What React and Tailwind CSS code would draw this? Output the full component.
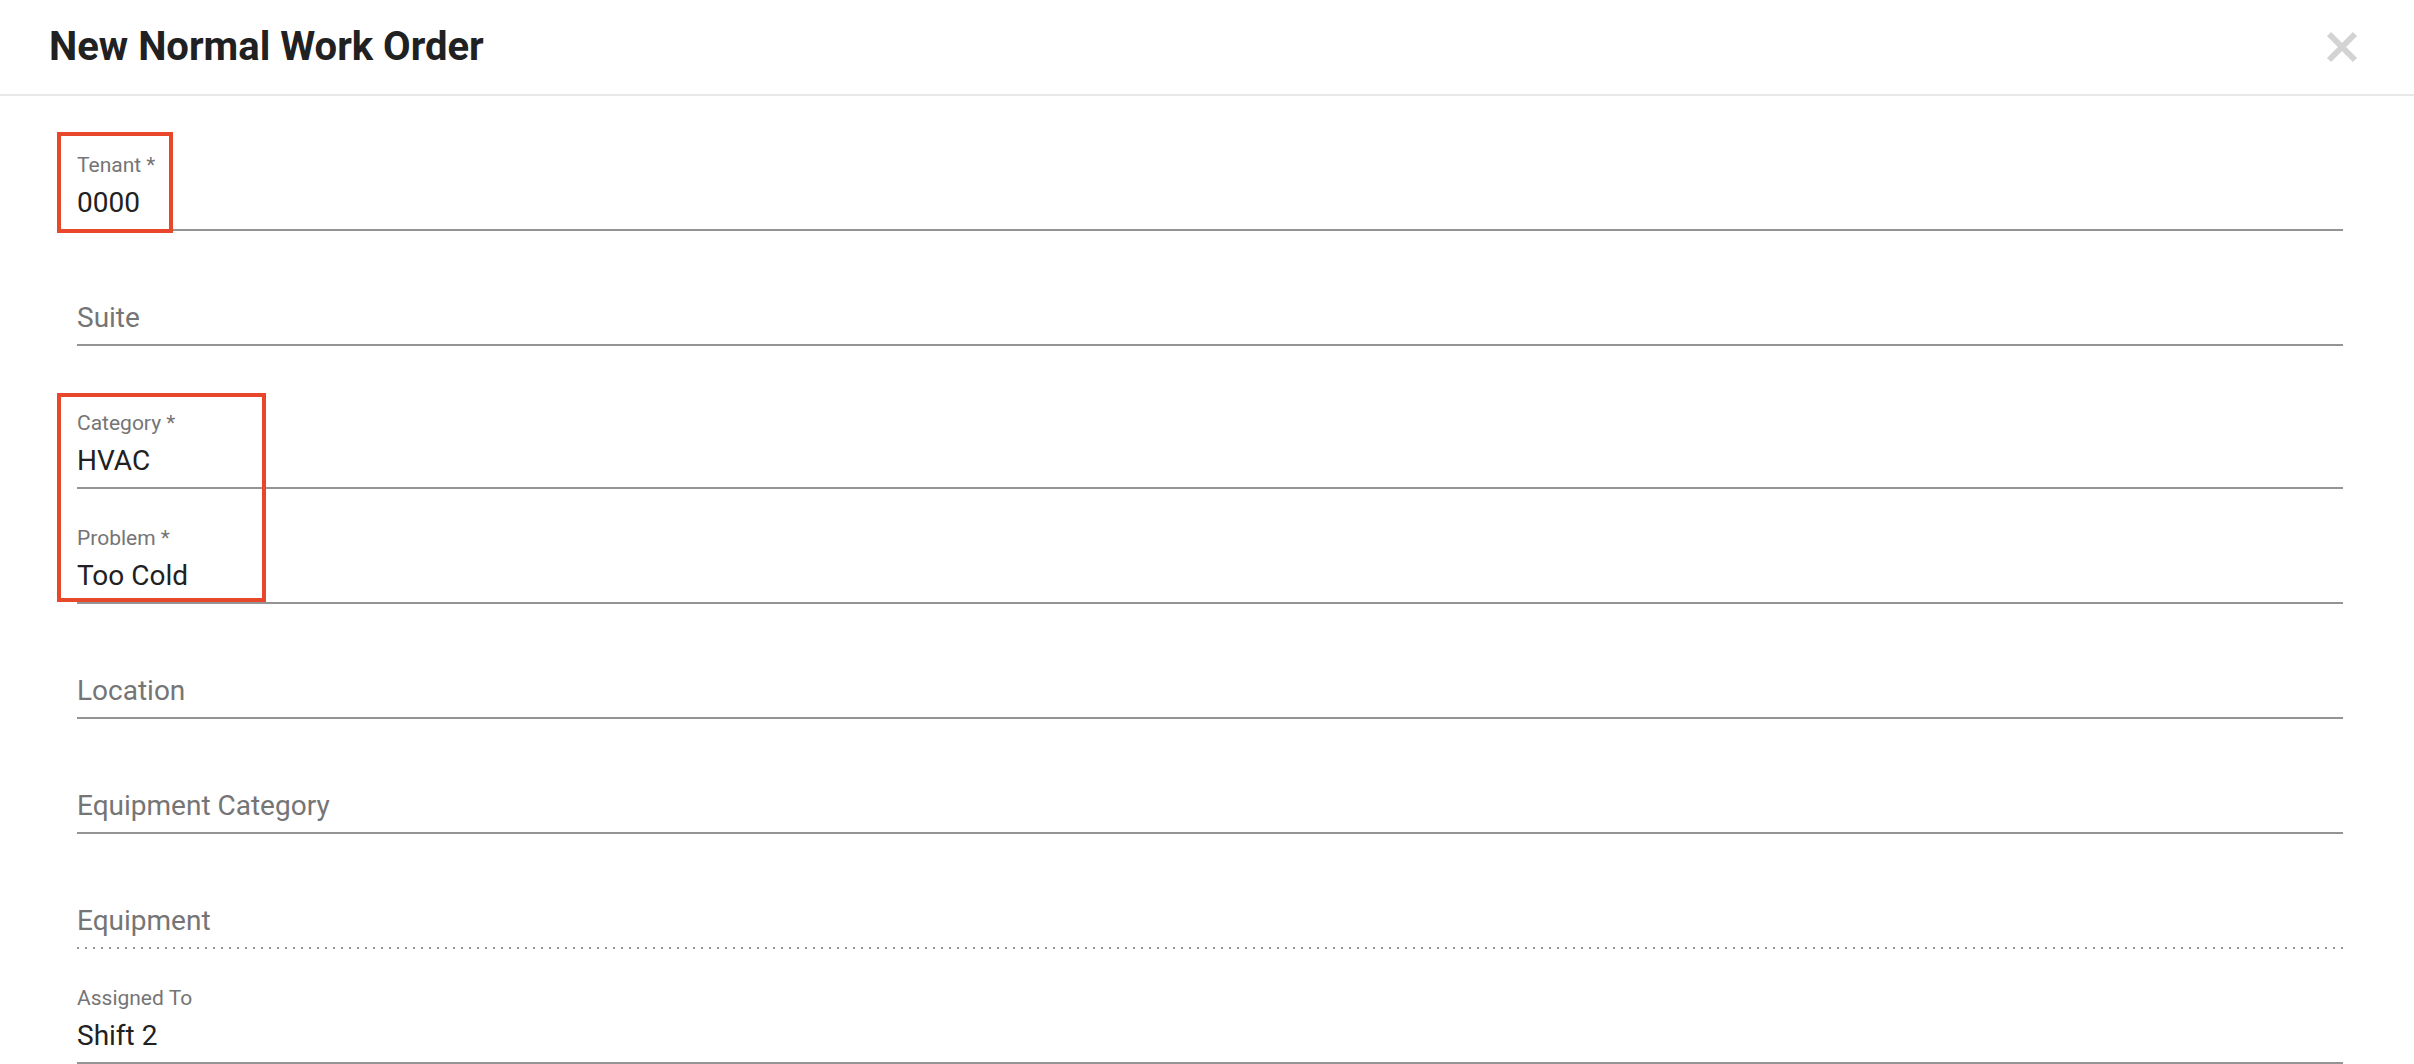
import React from 'react';

const fields = [
  { label: 'Tenant *', value: '0000' },
  { placeholder: 'Suite' },
  { label: 'Category *', value: 'HVAC', gap: true },
  { label: 'Problem *', value: 'Too Cold' },
  { placeholder: 'Location' },
  { placeholder: 'Equipment Category' },
  { placeholder: 'Equipment', dotted: true },
  { label: 'Assigned To', value: 'Shift 2' },
];

const Field = ({ label, value, placeholder, dotted, gap }) => (
  <div className={`flex h-[115px] flex-col justify-end ${gap ? 'mt-[28px]' : ''}`}>
    {label && <div className="mb-[8px] text-[21px] leading-[24px] text-[#757575]">{label}</div>}
    <div className={`pb-[8px] text-[28px] leading-[36px] ${value ? 'text-[#212121]' : 'text-[#757575]'}`}>
      {value || placeholder}
    </div>
    {dotted ? (
      <div className="h-[2px] bg-[linear-gradient(to_right,#949494_2px,transparent_2px)] bg-[length:8px_2px] bg-repeat-x" />
    ) : (
      <div className="h-[2px] bg-[#949494]" />
    )}
  </div>
);

const App = () => {
  return (
    <div className="relative h-[1064px] w-[2414px] overflow-hidden bg-white font-['Roboto',sans-serif]">
      {/* header */}
      <div className="flex h-[96px] items-center justify-between border-b-2 border-[#e8e8e8] pl-[49px] pr-[56px]">
        <h1 className="text-[40px] font-bold leading-none text-[#212121]">New Normal Work Order</h1>
        <button type="button" className="flex h-[32px] w-[32px] items-center justify-center">
          <svg width="32" height="32" viewBox="0 0 32 32">
            <path d="M3 3 L29 29 M29 3 L3 29" stroke="#d3d3d3" strokeWidth="6" />
          </svg>
        </button>
      </div>

      {/* form */}
      <div className="pl-[77px] pr-[71px] pt-[20px]">
        {fields.map((f, i) => (
          <Field key={i} {...f} />
        ))}
      </div>

      {/* annotation boxes */}
      <div className="absolute left-[57px] top-[132px] h-[101px] w-[116px] border-[4px] border-[#e9472b]" />
      <div className="absolute left-[57px] top-[393px] h-[209px] w-[209px] border-[4px] border-[#e9472b]" />
    </div>
  );
};

export default App;
